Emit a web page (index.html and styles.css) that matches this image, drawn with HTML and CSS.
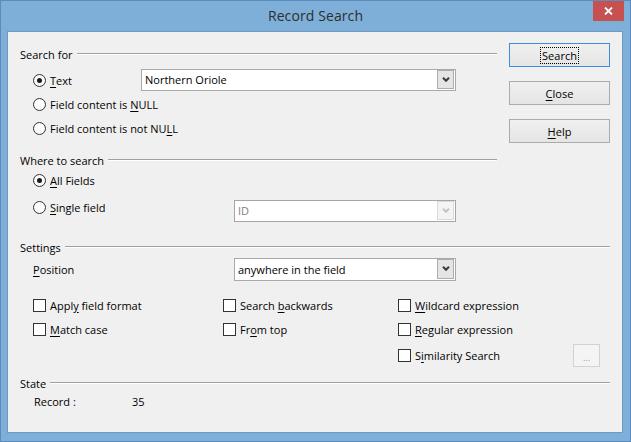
FILE: index.html
```html
<!DOCTYPE html>
<html>
<head>
<meta charset="utf-8">
<title>Record Search</title>
<link rel="stylesheet" href="styles.css">
</head>
<body>
<div class="window">
  <div class="titlebar">
    <span class="spacer"></span>
    <div class="title">Record Search</div>
    <div class="close">
      <svg width="9" height="8" viewBox="0 0 9 8"><path d="M1 0.5 L8 7.5 M8 0.5 L1 7.5" stroke="#fff" stroke-width="1.8" fill="none"/></svg>
    </div>
  </div>
  <div class="client">
    <div class="top">
      <div class="leftcol">
        <div class="heading"><span>Search for</span><i class="line"></i></div>
        <div class="row h24 mt5">
          <label class="opt w-text"><span class="radio on"></span><span><u>T</u>ext</span></label>
          <div class="combo c-text"><span class="val">Northern Oriole</span><span class="arrow"><svg width="8" height="5" viewBox="0 0 8 5"><path d="M1 0.8 L4 3.8 L7 0.8" stroke="#3c3c3c" stroke-width="2" fill="none"/></svg></span></div>
        </div>
        <div class="row h24">
          <label class="opt"><span class="radio"></span><span>Field content is <u>N</u>ULL</span></label>
        </div>
        <div class="row h24">
          <label class="opt"><span class="radio"></span><span>Field content is not NU<u>L</u>L</span></label>
        </div>
        <div class="heading mt11"><span>Where to search</span><i class="line"></i></div>
        <div class="row h22">
          <label class="opt"><span class="radio on"></span><span><u>A</u>ll Fields</span></label>
        </div>
        <div class="row h22 mt5">
          <label class="opt w-field"><span class="radio"></span><span><u>S</u>ingle field</span></label>
          <div class="combo c-id disabled"><span class="val">ID</span><span class="arrow"><svg width="8" height="5" viewBox="0 0 8 5"><path d="M1 0.8 L4 3.8 L7 0.8" stroke="#c4c4c4" stroke-width="2" fill="none"/></svg></span></div>
        </div>
      </div>
      <div class="rightcol">
        <button class="btn default"><span class="focus">Search</span></button>
        <button class="btn"><span><u>C</u>lose</span></button>
        <button class="btn"><span><u>H</u>elp</span></button>
      </div>
    </div>

    <div class="heading mt20 full"><span>Settings</span><i class="line"></i></div>
    <div class="row h24 mt1">
      <span class="lbl w-field"><u>P</u>osition</span>
      <div class="combo c-pos"><span class="val">anywhere in the field</span><span class="arrow"><svg width="8" height="5" viewBox="0 0 8 5"><path d="M1 0.8 L4 3.8 L7 0.8" stroke="#3c3c3c" stroke-width="2" fill="none"/></svg></span></div>
    </div>
    <div class="checks">
      <label class="opt"><span class="check"></span><span>Appl<u>y</u> field format</span></label>
      <label class="opt"><span class="check"></span><span>Search <u>b</u>ackwards</span></label>
      <label class="opt"><span class="check"></span><span><u>W</u>ildcard expression</span></label>
      <span></span>
      <label class="opt"><span class="check"></span><span><u>M</u>atch case</span></label>
      <label class="opt"><span class="check"></span><span>Fr<u>o</u>m top</span></label>
      <label class="opt"><span class="check"></span><span><u>R</u>egular expression</span></label>
      <span></span>
      <span></span>
      <span></span>
      <label class="opt"><span class="check"></span><span>S<u>i</u>milarity Search</span></label>
      <button class="dots">...</button>
    </div>

    <div class="heading mt7 full"><span>State</span><i class="line"></i></div>
    <div class="row h18">
      <span class="lbl w-rec">Record :</span>
      <span>35</span>
    </div>
  </div>
</div>
</body>
</html>
```

FILE: styles.css
```css
* { box-sizing: border-box; }
html, body { margin: 0; padding: 0; }
body {
  width: 631px;
  height: 442px;
  overflow: hidden;
  font-family: "Open Sans", "Noto Sans", sans-serif;
  font-size: 11px;
  color: #000;
  background: #7eafd8;
}
.window {
  width: 631px;
  height: 442px;
  background: #7eafd8;
  border: 1px solid #5b8bbf;
  display: flex;
  flex-direction: column;
}
.titlebar {
  height: 30px;
  flex: none;
  display: grid;
  grid-template-columns: 1fr auto 1fr;
  align-items: start;
}
.title {
  font-size: 14px;
  color: #2e2e2e;
  line-height: 30px;
  letter-spacing: 0.1px;
}
.close {
  justify-self: end;
  width: 31px;
  height: 20px;
  margin-right: 6px;
  background: #c75050;
  display: flex;
  align-items: center;
  justify-content: center;
}
.client {
  flex: 1;
  margin: 0 7px 8px 6px;
  background: #f0f0f0;
  border: 1px solid #6f98c4;
  padding: 13px 12px 0 11px;
  display: flex;
  flex-direction: column;
}
.top { display: flex; gap: 12px; }
.leftcol { width: 478px; display: flex; flex-direction: column; }
.rightcol {
  width: 101px;
  display: flex;
  flex-direction: column;
  gap: 14px;
  margin-top: -2px;
}
.heading {
  height: 18px;
  display: flex;
  align-items: center;
  gap: 4px;
  flex: none;
}
.heading span { padding-left: 1px; }
.heading .line {
  flex: 1;
  height: 2px;
  border-top: 1px solid #a0a0a0;
  border-bottom: 1px solid #ffffff;
}
.mt1 { margin-top: 1px; }
.mt5 { margin-top: 5px; }
.mt7 { margin-top: 7px; }
.mt11 { margin-top: 11px; }
.mt20 { margin-top: 20px; }
.h18 { height: 18px; }
.h22 { height: 22px; }
.h24 { height: 24px; }
.row {
  display: flex;
  align-items: center;
  padding-left: 14px;
  flex: none;
}
.opt { display: flex; align-items: center; white-space: nowrap; }
.w-text { width: 108px; }
.w-field { width: 201px; }
.w-rec { width: 99px; padding-left: 1px; }
.radio {
  width: 13px;
  height: 13px;
  border-radius: 50%;
  border: 1px solid #333;
  background: radial-gradient(circle at 50% 40%, #ffffff 0%, #f4f4f4 100%);
  margin-right: 4px;
  display: flex;
  align-items: center;
  justify-content: center;
  flex: none;
}
.radio.on::after {
  content: "";
  width: 5px;
  height: 5px;
  border-radius: 50%;
  background: #1a1a1a;
}
.check {
  width: 13px;
  height: 13px;
  border: 1px solid #333;
  background: #fff;
  margin-right: 4px;
  flex: none;
}
.combo {
  height: 22px;
  border: 1px solid #a9a9a9;
  background: #fff;
  display: flex;
  align-items: flex-start;
  flex: none;
}
.combo .val {
  flex: 1;
  line-height: 20px;
  padding-left: 3px;
  white-space: nowrap;
}
.combo .arrow {
  width: 17px;
  height: 19px;
  margin-right: 1px;
  border: 1px solid #adadad;
  background: #e5e5e5;
  display: flex;
  align-items: center;
  justify-content: center;
}
.c-text { width: 315px; }
.c-id { width: 222px; height: 22px; margin-top: 7px; }
.c-pos { width: 222px; height: 23px; }
.c-pos .val { line-height: 21px; }
.c-pos .arrow { height: 20px; }
.combo.disabled { border-color: #a6a6a6; }
.combo.disabled .val { color: #7f7f7f; }
.combo.disabled .arrow { background: #f4f4f4; border-color: #dadada; }
.btn {
  width: 101px;
  height: 24px;
  border: 1px solid #acacac;
  background: linear-gradient(#f0f0f0, #e5e5e5);
  font-family: inherit;
  font-size: 11px;
  color: #000;
  padding: 0;
  display: flex;
  align-items: center;
  justify-content: center;
}
.btn.default { border-color: #3c8fe0; }
.btn .focus {
  outline: 1px dotted #000;
  padding: 0 1px;
  line-height: 15px;
}
.checks {
  display: grid;
  grid-template-columns: 190px 175px 175px 27px;
  grid-template-rows: 20px 22px 23px;
  row-gap: 3.5px;
  padding-left: 14px;
  margin-top: 14px;
  align-items: center;
}
.dots {
  width: 27px;
  height: 23px;
  border: 1px solid #d2d2d2;
  background: #f4f4f4;
  color: #9a9a9a;
  font-family: inherit;
  font-size: 9px;
  padding: 4px 0 0;
}
u { text-decoration: underline; text-underline-offset: 2px; }
```
